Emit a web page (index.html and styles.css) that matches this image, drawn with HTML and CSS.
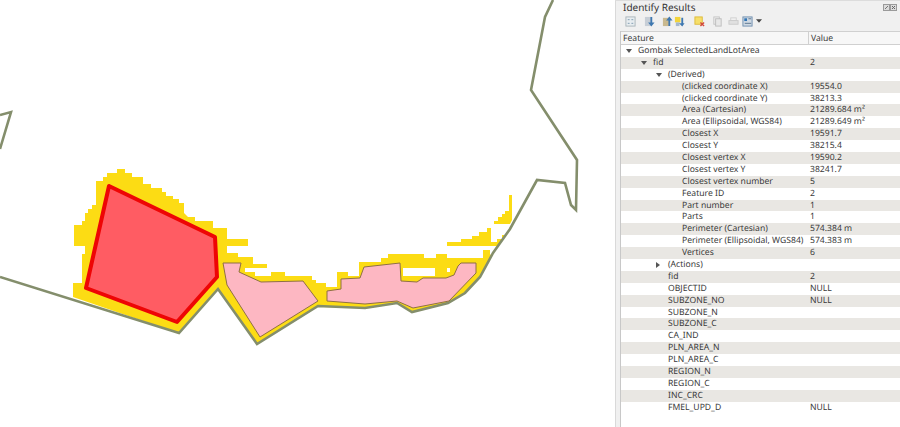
FILE: index.html
```html
<!DOCTYPE html>
<html lang="en">
<head>
<meta charset="utf-8">
<title>Identify Results</title>
<link rel="stylesheet" href="styles.css">
</head>
<body>
<div class="app">
  <svg class="map" viewBox="0 0 615 427" aria-label="Map">
    <polygon class="yellow" points="73,297 73,283 82,283 82,254 85,254 85,246 74,246 74,225 82,225 82,221 85,221 85,213 88,213 88,209 92,209 92,205 96,205 96,181 103,181 103,177 107,177 107,173 117,173 117,169 125,169 125,173 132,173 132,177 143,177 143,184 151,184 151,188 162,188 162,192 166,192 166,196 173,196 173,199 179,199 179,203 184,203 184,213 188,217 195,217 195,221 213,221 213,228 227,228 227,239 248,239 248,246 227,246 227,253 238,253 238,257 253,257 253,264 267,264 267,268 245,268 245,272 255,272 255,276 271,276 271,272 285,272 285,276 312,276 312,280 316,280 316,283 326,283 326,287 337,287 337,272 348,272 348,276 359,276 359,262 381,262 381,258 388,258 388,254 424,254 424,258 436,258 436,254 447,254 447,258 483,258 483,250 490,250 490,255 493,253 480,277 465,293 448,303 412,312 397,303 365,308 320,307 318,306 257,344 218,289 178,333"/>
    <polygon class="yellow" points="447,246 447,242 461,242 461,239 472,239 472,236 479,236 479,232 487,232 487,228 491,228 491,242 497,242 497,239 502,239 502,235 506,235 498,246"/>
    <polygon class="yellow" points="494,224 494,221 498,221 498,217 502,217 502,214 505,214 505,211 509,211 509,195 512,195 512,220 510,224"/>
    <rect class="gap" x="403" y="268" width="32" height="8"/>
    <rect class="gap" x="447" y="268" width="3" height="4"/>
    <polyline class="coast" points="0,277 179,333 218,289 257,344 318,306 365,308 397,303 412,312 448,303 465,293 480,277 493,253 510,229 537,180 565,183 571,205 576,210 577,160 531,90 545,17 553,0"/>
    <polyline class="coast" points="0,115 11,112 0,149"/>
    <polygon class="pink" points="223,263 241,263 239,272 261,282 303,281 318,301 260,337 227,285"/>
    <polygon class="pink" points="327,291 341,289 341,279 360,278 364,267 400,263 401,281 417,282 423,278 446,278 454,275 458,266 461,263 476,263 476,273 449,301 413,308 397,301 365,304 327,301"/>
    <polygon class="red" points="109,186 215,237 217,277 177,322 86,288"/>
  </svg>
  <section class="panel">
    <header class="title-bar">
      <span class="title">Identify Results</span>
      <span class="win-btns">
        <svg class="win-btn" viewBox="0 0 7 7"><rect x=".5" y=".5" width="6" height="6" fill="#dcdcdc" stroke="#9a9a9a"/><path d="M2 5 5 2" fill="none" stroke="#777"/></svg>
        <svg class="win-btn" viewBox="0 0 7 7"><rect x=".5" y=".5" width="6" height="6" fill="#dcdcdc" stroke="#9a9a9a"/><path d="M2 2l3 3M5 2 2 5" stroke="#666"/></svg>
      </span>
    </header>
    <div class="toolbar">
      <svg class="tool tool-first" viewBox="0 0 12 12"><rect x="1" y="1" width="10" height="10" fill="#e8edf0" stroke="#a9b4ba"/><path d="M3 4h2M3 8h2M7 4h2M7 8h2" stroke="#7b98ad"/></svg>
      <svg class="tool tool-a" viewBox="0 0 12 12"><rect x="1" y="1" width="7" height="10" fill="#c7ced6"/><path d="M7 1v6H4.500L8 11.500 11.500 7H9V1z" fill="#3f78b0"/></svg>
      <svg class="tool tool-b" viewBox="0 0 12 12"><rect x="1" y="2" width="7" height="9" fill="#c9b98f"/><path d="M7 11V5H4.500L8 .5 11.500 5H9v6z" fill="#3f78b0"/></svg>
      <svg class="tool tool-c" viewBox="0 0 12 12"><rect x="1" y="1" width="6" height="6" fill="#f2d43a"/><rect x="2" y="7" width="4" height="4" fill="#a5b8cc"/><path d="M8 2v6H5.500L9 11.500 11.500 8H10V2z" fill="#3f78b0"/></svg>
      <svg class="tool tool-d" viewBox="0 0 12 12"><rect x="1" y="1" width="8" height="8" fill="#f6df6a" stroke="#dcb93a"/><path d="M7 7l4 4M11 7l-4 4" stroke="#d2483c" stroke-width="1.500"/></svg>
      <svg class="tool tool-e" viewBox="0 0 12 12"><rect x="2" y="1" width="6" height="8" fill="#eee" stroke="#c4c4c4"/><rect x="4" y="3" width="6" height="8" fill="#e8e8e8" stroke="#bcbcbc"/></svg>
      <svg class="tool tool-f" viewBox="0 0 12 12"><rect x="3" y="2" width="6" height="3" fill="#f0f0f0" stroke="#cfcfcf"/><rect x="1" y="5" width="10" height="4" fill="#e0e0e0" stroke="#cacaca"/></svg>
      <svg class="tool tool-g" viewBox="0 0 12 12"><rect x="1" y="1" width="10" height="10" fill="#cfd9e3" stroke="#6f8faf"/><rect x="2.500" y="2.500" width="3" height="3" fill="#2f74b5"/><path d="M7 3h3M3 8h7" stroke="#58728c"/></svg>
      <svg class="tool-caret" viewBox="0 0 7 4"><path d="M0 0h7L3.500 4z" fill="#444"/></svg>
    </div>
    <div class="tree">
      <div class="tree-head"><span class="col-feature">Feature</span><span class="col-value">Value</span></div>
      <div class="row l0"><span class="name"><i class="arrow open"></i>Gombak SelectedLandLotArea</span><span></span></div>
      <div class="row l1 band"><span class="name"><i class="arrow open"></i>fid</span><span>2</span></div>
      <div class="row l2"><span class="name"><i class="arrow open"></i>(Derived)</span><span></span></div>
      <div class="row l3 band"><span class="name">(clicked coordinate X)</span><span>19554.0</span></div>
      <div class="row l3"><span class="name">(clicked coordinate Y)</span><span>38213.3</span></div>
      <div class="row l3 band"><span class="name">Area (Cartesian)</span><span>21289.684 m²</span></div>
      <div class="row l3"><span class="name">Area (Ellipsoidal, WGS84)</span><span>21289.649 m²</span></div>
      <div class="row l3 band"><span class="name">Closest X</span><span>19591.7</span></div>
      <div class="row l3"><span class="name">Closest Y</span><span>38215.4</span></div>
      <div class="row l3 band"><span class="name">Closest vertex X</span><span>19590.2</span></div>
      <div class="row l3"><span class="name">Closest vertex Y</span><span>38241.7</span></div>
      <div class="row l3 band"><span class="name">Closest vertex number</span><span>5</span></div>
      <div class="row l3"><span class="name">Feature ID</span><span>2</span></div>
      <div class="row l3 band"><span class="name">Part number</span><span>1</span></div>
      <div class="row l3"><span class="name">Parts</span><span>1</span></div>
      <div class="row l3 band"><span class="name">Perimeter (Cartesian)</span><span>574.384 m</span></div>
      <div class="row l3"><span class="name">Perimeter (Ellipsoidal, WGS84)</span><span>574.383 m</span></div>
      <div class="row l3 band"><span class="name">Vertices</span><span>6</span></div>
      <div class="row l2"><span class="name"><i class="arrow closed"></i>(Actions)</span><span></span></div>
      <div class="row l2 band"><span class="name">fid</span><span>2</span></div>
      <div class="row l2"><span class="name">OBJECTID</span><span>NULL</span></div>
      <div class="row l2 band"><span class="name">SUBZONE_NO</span><span>NULL</span></div>
      <div class="row l2"><span class="name">SUBZONE_N</span><span></span></div>
      <div class="row l2 band"><span class="name">SUBZONE_C</span><span></span></div>
      <div class="row l2"><span class="name">CA_IND</span><span></span></div>
      <div class="row l2 band"><span class="name">PLN_AREA_N</span><span></span></div>
      <div class="row l2"><span class="name">PLN_AREA_C</span><span></span></div>
      <div class="row l2 band"><span class="name">REGION_N</span><span></span></div>
      <div class="row l2"><span class="name">REGION_C</span><span></span></div>
      <div class="row l2 band"><span class="name">INC_CRC</span><span></span></div>
      <div class="row l2"><span class="name">FMEL_UPD_D</span><span>NULL</span></div>
    </div>
  </section>
</div>
</body>
</html>
```
FILE: styles.css
```css
* { box-sizing: border-box; }
html, body { margin: 0; height: 100%; overflow: hidden; background: #fff; }
body { font-family: "Noto Sans", "Open Sans", sans-serif; font-size: 8.6px; color: #3a3a3a; text-rendering: geometricPrecision; }
.app { display: flex; width: 900px; height: 427px; border-top: 1px solid #dcdcdc; }
.map { flex: 0 0 615px; width: 615px; height: 427px; display: block; margin-top: -1px; background: #fff; }
.yellow { fill: #fcdc14; }
.gap { fill: #fff; }
.coast { fill: none; stroke: #848e6c; stroke-width: 2.6; stroke-linejoin: miter; }
.pink { fill: #fdb7c2; stroke: #8f6f45; stroke-width: 1; }
.red { fill: #ff5c63; stroke: #ee0505; stroke-width: 4; stroke-linejoin: round; }
.panel { flex: 1; display: flex; flex-direction: column; min-width: 0; background: #f0f0f0; border-left: 1px solid #d9d9d9; }
.title-bar { display: flex; justify-content: space-between; align-items: center; height: 12px; padding: 0 3px 0 7px; }
.title { font-size: 10px; color: #333; }
.win-btns { display: flex; gap: 0; }
.win-btn { width: 7px; height: 7px; display: block; }
.toolbar { display: flex; align-items: center; height: 18px; padding: 0 0 2px 9px; }
.tool { width: 11px; height: 11px; display: block; flex: none; }
.tool-a { margin-left: 8px; }
.tool-b { margin-left: 7px; }
.tool-c { margin-left: 1px; }
.tool-d { margin-left: 9px; }
.tool-e { margin-left: 7px; }
.tool-f { margin-left: 5px; }
.tool-g { margin-left: 3px; }
.tool-caret { width: 6px; height: 4px; margin-left: 3px; display: block; }
.tree { flex: 1; margin-left: 4px; background: #fff; border-left: 1px solid #c8c8c8; min-height: 0; overflow: hidden; }
.tree-head { display: grid; grid-template-columns: 188px 1fr; height: 14px; align-items: center; background: #f7f7f7; border-top: 1px solid #d0d0d0; border-bottom: 1px solid #d0d0d0; font-size: 8.6px; line-height: 12px; }
.col-feature { padding-left: 2px; border-right: 1px solid #d0d0d0; }
.col-value { padding-left: 2px; }
.row { display: grid; grid-template-columns: 188px 1fr; height: 11.9px; line-height: 11.9px; white-space: nowrap; }
.row > span:last-child { padding-left: 1px; }
.band { background: #e9e7e3; }
.name { display: block; position: relative; }
.l0 .name { padding-left: 17px; }
.l1 .name { padding-left: 32px; }
.l2 .name { padding-left: 47px; }
.l3 .name { padding-left: 61px; }
.arrow { position: absolute; top: 4px; width: 0; height: 0; }
.arrow.open { border-left: 3px solid transparent; border-right: 3px solid transparent; border-top: 4px solid #555; }
.arrow.closed { top: 3px; border-top: 3px solid transparent; border-bottom: 3px solid transparent; border-left: 4px solid #555; }
.l0 .arrow { left: 5px; }
.l1 .arrow { left: 20px; }
.l2 .arrow { left: 35px; }
```
